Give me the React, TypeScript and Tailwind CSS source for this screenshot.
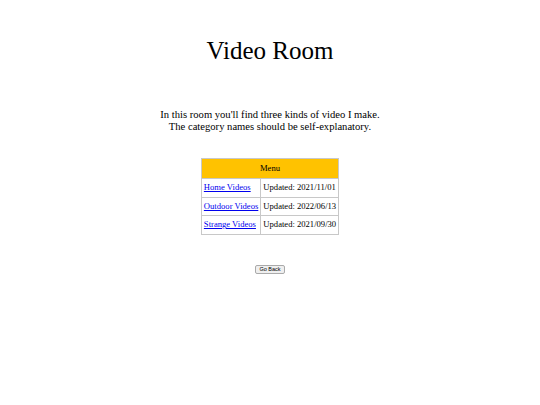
import React from "react";

export default function App() {
  const rows = [
    ["Home Videos", "Updated: 2021/11/01"],
    ["Outdoor Videos", "Updated: 2022/06/13"],
    ["Strange Videos", "Updated: 2021/09/30"],
  ];
  return (
    <div className="w-[540px] h-[405px] bg-white text-black flex flex-col items-center" style={{ fontFamily: '"Liberation Serif", serif' }}>
      <h1 className="mt-[35px] text-[25px] leading-[32px] font-normal">Video Room</h1>
      <div className="mt-[42px] text-[10.6px] leading-[12px] text-center">
        <p>In this room you'll find three kinds of video I make.</p>
        <p>The category names should be self-explanatory.</p>
      </div>
      <table className="mt-[25px] border border-[#c8c8c8] border-collapse text-[8.6px]">
        <thead>
          <tr>
            <th colSpan={2} className="bg-[#ffc200] font-normal h-[20px] border border-[#c8c8c8]">Menu</th>
          </tr>
        </thead>
        <tbody>
          {rows.map(([a, b]) => (
            <tr key={a} className="h-[18.5px]">
              <td className="border border-[#c8c8c8] px-[2px]">
                <a href="#" className="text-[#0000ee] underline">{a}</a>
              </td>
              <td className="border border-[#c8c8c8] px-[2px]">{b}</td>
            </tr>
          ))}
        </tbody>
      </table>
      <button className="mt-[30px] text-[5.5px] px-[3px] h-[9.5px] leading-[7px] border border-[#aaa] rounded-[2px] bg-[#efefef]" style={{ fontFamily: '"Liberation Sans", sans-serif' }}>Go Back</button>
    </div>
  );
}
